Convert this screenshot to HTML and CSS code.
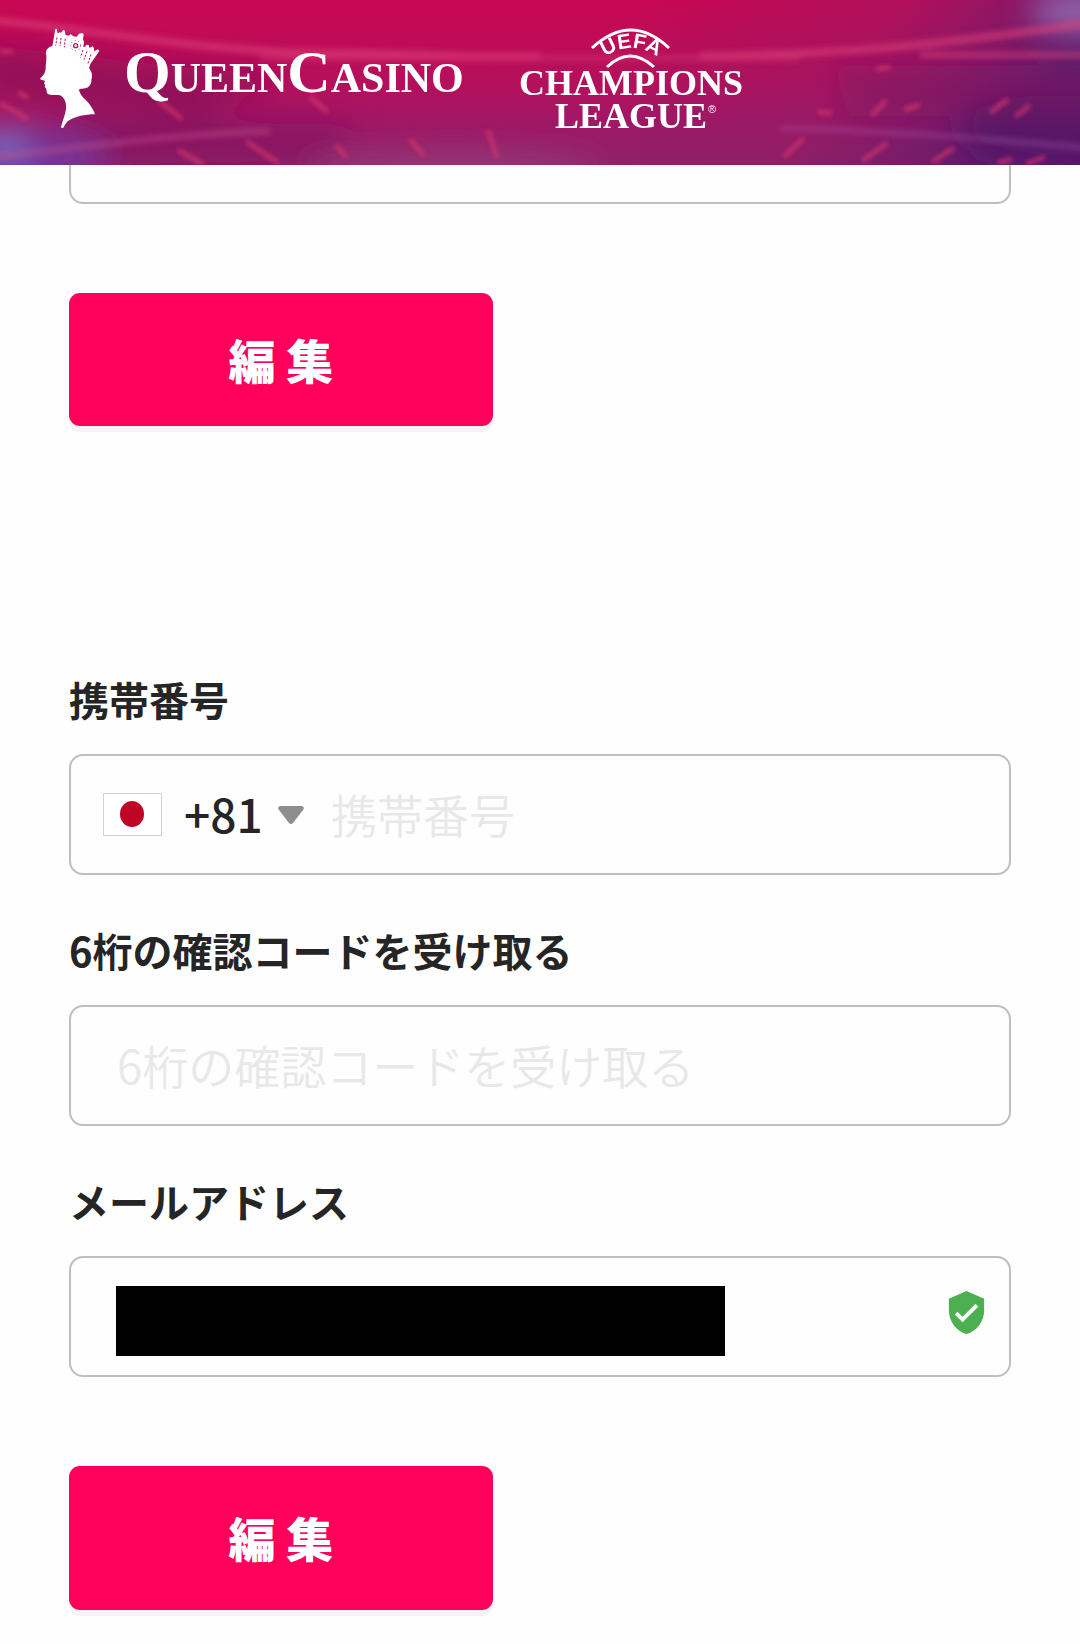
FILE: index.html
```html
<!DOCTYPE html>
<html lang="ja">
<head>
    <meta charset="UTF-8">
    <meta name="viewport" content="width=device-width, initial-scale=1.0">
    <title>Queen Casino</title>
    <link rel="stylesheet" href="styles.css">
</head>
<body>
    <header class="header">
        <!-- Stadium lights -->
        <svg class="header-bg" viewBox="0 0 1080 165" preserveAspectRatio="none" aria-hidden="true">
            <defs>
                <linearGradient id="base" x1="0" y1="0" x2="0" y2="1">
                    <stop offset="0" stop-color="#c90752"/>
                    <stop offset="0.5" stop-color="#b5105c"/>
                    <stop offset="0.75" stop-color="#a01865"/>
                    <stop offset="1" stop-color="#8e2268"/>
                </linearGradient>
                <linearGradient id="right" x1="0" y1="0" x2="1" y2="0.3">
                    <stop offset="0" stop-color="#8a1c66" stop-opacity="0"/>
                    <stop offset="0.55" stop-color="#8f1c66" stop-opacity="0.4"/>
                    <stop offset="1" stop-color="#5c1a6c"/>
                </linearGradient>
                <filter id="b1" x="-50%" y="-50%" width="200%" height="200%"><feGaussianBlur stdDeviation="2"/></filter>
                <filter id="b3" x="-50%" y="-100%" width="200%" height="300%"><feGaussianBlur stdDeviation="3"/></filter>
                <filter id="b15" x="-50%" y="-100%" width="200%" height="300%"><feGaussianBlur stdDeviation="15"/></filter>
            </defs>
            <rect width="1080" height="165" fill="url(#base)"/>
            <rect x="640" width="440" height="165" fill="url(#right)"/>
            <g filter="url(#b15)">
                <path d="M-20 45C90 55 180 70 290 75L200 120-20 100z" fill="#8c1058" opacity="0.8"/>
                <path d="M70 120L360 125 320 160 80 165z" fill="#851160" opacity="0.8"/>
                <ellipse cx="20" cy="156" rx="90" ry="26" fill="#743599"/>
                <ellipse cx="5" cy="146" rx="26" ry="14" fill="#7770c8"/>
                <ellipse cx="450" cy="168" rx="150" ry="14" fill="#973b7c"/>
                <ellipse cx="1085" cy="12" rx="56" ry="22" fill="#9264aa"/>
                <ellipse cx="1060" cy="130" rx="100" ry="35" fill="#561768"/>
                <path d="M830 66h270v50H850z" fill="#821b60" opacity="0.5"/>
            </g>
            <g fill="none" stroke="#dc3f78" filter="url(#b3)" opacity="0.7">
                <path d="M-10 20C100 30 200 52 330 53S430 58 540 56" stroke-width="7"/>
                <path d="M260 58H800" stroke-width="5" opacity="0.7"/>
                <path d="M700 56C880 54 980 38 1090 23" stroke-width="7"/>
                <path d="M920 55H1090" stroke-width="5"/>
                <path d="M-10 157C80 148 160 135 270 131" stroke-width="4" stroke="#c5558f"/>
                <path d="M780 128C890 131 980 138 1090 148" stroke-width="3" stroke="#b05aa8"/>
            </g>
            <g fill="none" stroke="#d8386e" stroke-width="5" filter="url(#b1)" opacity="0.65">
                <path d="M0 103L28 119M18 92L28 98M178 150L204 165M246 141L278 163M410 139L424 156M488 130L497 158M336 145L347 158M310 97L328 112M158 100L182 119"/>
                <path d="M784 157L804 138M862 161L887 143M932 162L954 148M990 113L1008 99M1015 117L1030 105M1026 164L1045 157M998 163L1012 159M904 110L920 105M818 112L832 113M876 69L890 67M0 51L13 52M872 116L886 100"/>
            </g>
        </svg>

        <a class="brand" href="#" aria-label="Queen Casino">
            <svg class="queen" viewBox="0 0 270 360" aria-hidden="true">
                <path fill="#fff" d="M67 78L76 27 81 26 82 38 85 40 90 36 93 39 100 29 105 32 106 44 116 47 122 42 130 49 140 50 147 41 157 39 161 43 159 58 162 66 160 81 166 80 168 74 176 75 179 84 188 79 192 85 192 94 204 88 208 93 181 132 177 145C186 155 189 169 184 179C186 190 178 202 165 205C158 208 151 204 147 209C150 226 164 235 174 247C184 259 190 270 195 283C164 283 135 290 119 300C108 306 104 318 100 323Q96 326 93 322C96 307 105 287 108 268C111 249 102 231 90 226C80 223 62 227 54 222C48 218 52 207 46 203Q42 199 46 195L42 191 45 182 32 179 31 175C42 165 46 158 47 145C47 130 50 119 49 107C45 91 53 82 67 78z"/>
                <g fill="none" stroke="#b8165d" stroke-width="3" stroke-dasharray="7 4">
                    <path d="M81 52L77 77M93 54L90 78M106 56L103 82M159 90L151 113M171 94L162 119M183 103L174 130"/>
                    <circle cx="137" cy="77" r="15" stroke-dasharray="3 8"/>
                </g>
                <circle cx="137" cy="77" r="6" fill="none" stroke="#b8165d" stroke-width="4"/>
            </svg>
            <span class="brand-name">Queen<span class="brand-second">Casino</span></span>
        </a>

        <a class="league" href="#" aria-label="UEFA Champions League">
            <svg viewBox="0 0 226 120" aria-hidden="true">
                <path d="M74 23Q113-13 151 23M89 42Q112 20 136 42" fill="none" stroke="#fff" stroke-width="3"/>
                <path id="arc" d="M74 42Q113 4 152 42" fill="none"/>
                <text class="uefa"><textPath href="#arc" startOffset="50%" text-anchor="middle">UEFA</textPath></text>
                <text class="league-name" x="113" y="70" text-anchor="middle">CHAMPIONS</text>
                <text class="league-name" x="113" y="103" text-anchor="middle">LEAGUE</text>
                <text class="reg" x="190" y="88">®</text>
            </svg>
        </a>
    </header>

    <main class="content">
        <!-- Profile form, scrolled partly under the header -->
        <form class="profile-form">
            <input class="field" type="text" aria-label="氏名">
            <button type="button" class="edit-btn">編 集</button>
        </form>

        <form class="contact-form">
            <label for="phone">携帯番号</label>
            <div class="field phone-field">
                <svg class="flag" viewBox="0 0 59 43" aria-hidden="true">
                    <rect x="0.500" y="0.500" width="58" height="42" fill="#fff" stroke="#d2d2d2"/>
                    <ellipse cx="29" cy="21" rx="12" ry="13" fill="#c00424"/>
                </svg>
                <select class="country-code" aria-label="国番号">
                    <option>+81</option>
                </select>
                <svg class="arrow" viewBox="0 0 26 18" aria-hidden="true">
                    <path d="M2 0h22q3 1 1 4L15 17q-2 2-4 0L1 4q-2-3 1-4z" fill="#8e8e8e"/>
                </svg>
                <input type="tel" id="phone" placeholder="携帯番号">
            </div>

            <label for="code">6桁の確認コードを受け取る</label>
            <input class="field" type="text" id="code" placeholder="6桁の確認コードを受け取る">

            <label for="email">メールアドレス</label>
            <div class="field email-field">
                <input class="masked" type="text" id="email" readonly>
                <svg class="shield" viewBox="0 0 24 24" aria-hidden="true">
                    <path fill="#4caf50" d="M12 1L3 5v6c0 5.55 3.84 10.74 9 12 5.16-1.26 9-6.45 9-12V5l-9-4z"/>
                    <path fill="none" stroke="#fff" stroke-width="2" d="M6.700 12.300L10 15.600L17.300 8.300"/>
                </svg>
            </div>

            <button type="button" class="edit-btn edit-btn-large">編 集</button>
        </form>
    </main>
</body>
</html>
```
FILE: styles.css
```css
* {
    box-sizing: border-box;
}

body {
    margin: 0;
    background-color: #fefefe;
    color: #252525;
    font-family: "Noto Sans CJK JP", sans-serif;
}

input, select, button {
    font-family: inherit;
}

.header {
    position: sticky;
    top: 0;
    z-index: 1;
    display: flex;
    align-items: flex-start;
    height: 165px;
    padding: 20px 30px;
    overflow: hidden;
    background-color: #b5105c;
}

.header-bg {
    position: absolute;
    inset: 0;
    z-index: -1;
    width: 100%;
    height: 100%;
}

.brand {
    display: flex;
    color: #fff;
    text-decoration: none;
}

.queen {
    width: 90px;
    height: 120px;
}

.brand-name {
    padding: 12px 0 0 4px;
    font-family: "Liberation Serif", serif;
    font-size: 60px;
    font-weight: bold;
    font-variant: small-caps;
    line-height: 80px;
}

.league {
    margin-left: 54px;
}

.league svg {
    display: block;
    width: 226px;
    height: 120px;
    margin-top: 5px;
    fill: #fff;
}

.uefa {
    font-family: "Liberation Sans", sans-serif;
    font-size: 21px;
    font-weight: bold;
}

.league-name {
    font-family: "Liberation Serif", serif;
    font-size: 36px;
    font-weight: bold;
}

.reg {
    font-family: "Liberation Sans", sans-serif;
    font-size: 11px;
}

.content {
    margin-top: -82px;
    padding: 0 69px 34px;
}

.profile-form, .contact-form {
    display: flex;
    flex-direction: column;
}

.contact-form {
    margin-top: 245px;
}

label {
    margin-bottom: 27px;
    font-size: 40px;
    font-weight: bold;
    line-height: 56px;
}

.field {
    width: 100%;
    height: 121px;
    margin-bottom: 47px;
    padding: 0 46px 4px;
    border: 2px solid #bfbfbf;
    border-radius: 14px;
    background-color: #fefefe;
    font-size: 46px;
}

input {
    color: #252525;
    font-weight: 350;
}

input::placeholder {
    color: #e8e8e8;
    opacity: 1;
}

.phone-field, .email-field {
    display: flex;
    align-items: center;
}

.phone-field {
    padding: 0 32px;
}

.phone-field input {
    flex: 1;
    min-width: 0;
    height: 100%;
    padding: 0 0 4px 27px;
    border: none;
    background: none;
    font-size: 46px;
}

.flag {
    width: 59px;
    height: 43px;
}

.country-code {
    appearance: none;
    margin: 0 15px 0 22px;
    padding: 0 0 4px;
    border: none;
    background: none;
    color: #252525;
    font-size: 46px;
    font-weight: 500;
}

.arrow {
    width: 26px;
    height: 18px;
}

.email-field {
    justify-content: space-between;
    padding: 0 19px 0 45px;
}

.masked {
    width: calc(100% - 265px);
    height: 70px;
    margin-top: 8px;
    border: none;
    background-color: #000;
}

.shield {
    width: 47px;
    height: 47px;
    margin-bottom: 8px;
}

.edit-btn {
    width: 45%;
    height: 133px;
    margin-top: 42px;
    padding-bottom: 4px;
    border: none;
    border-radius: 11px;
    background-color: #ff005a;
    box-shadow: 0 6px 0 #f4f4f4;
    color: #fff;
    font-size: 47px;
    font-weight: 900;
    cursor: pointer;
}

.edit-btn-large {
    height: 144px;
}
```
